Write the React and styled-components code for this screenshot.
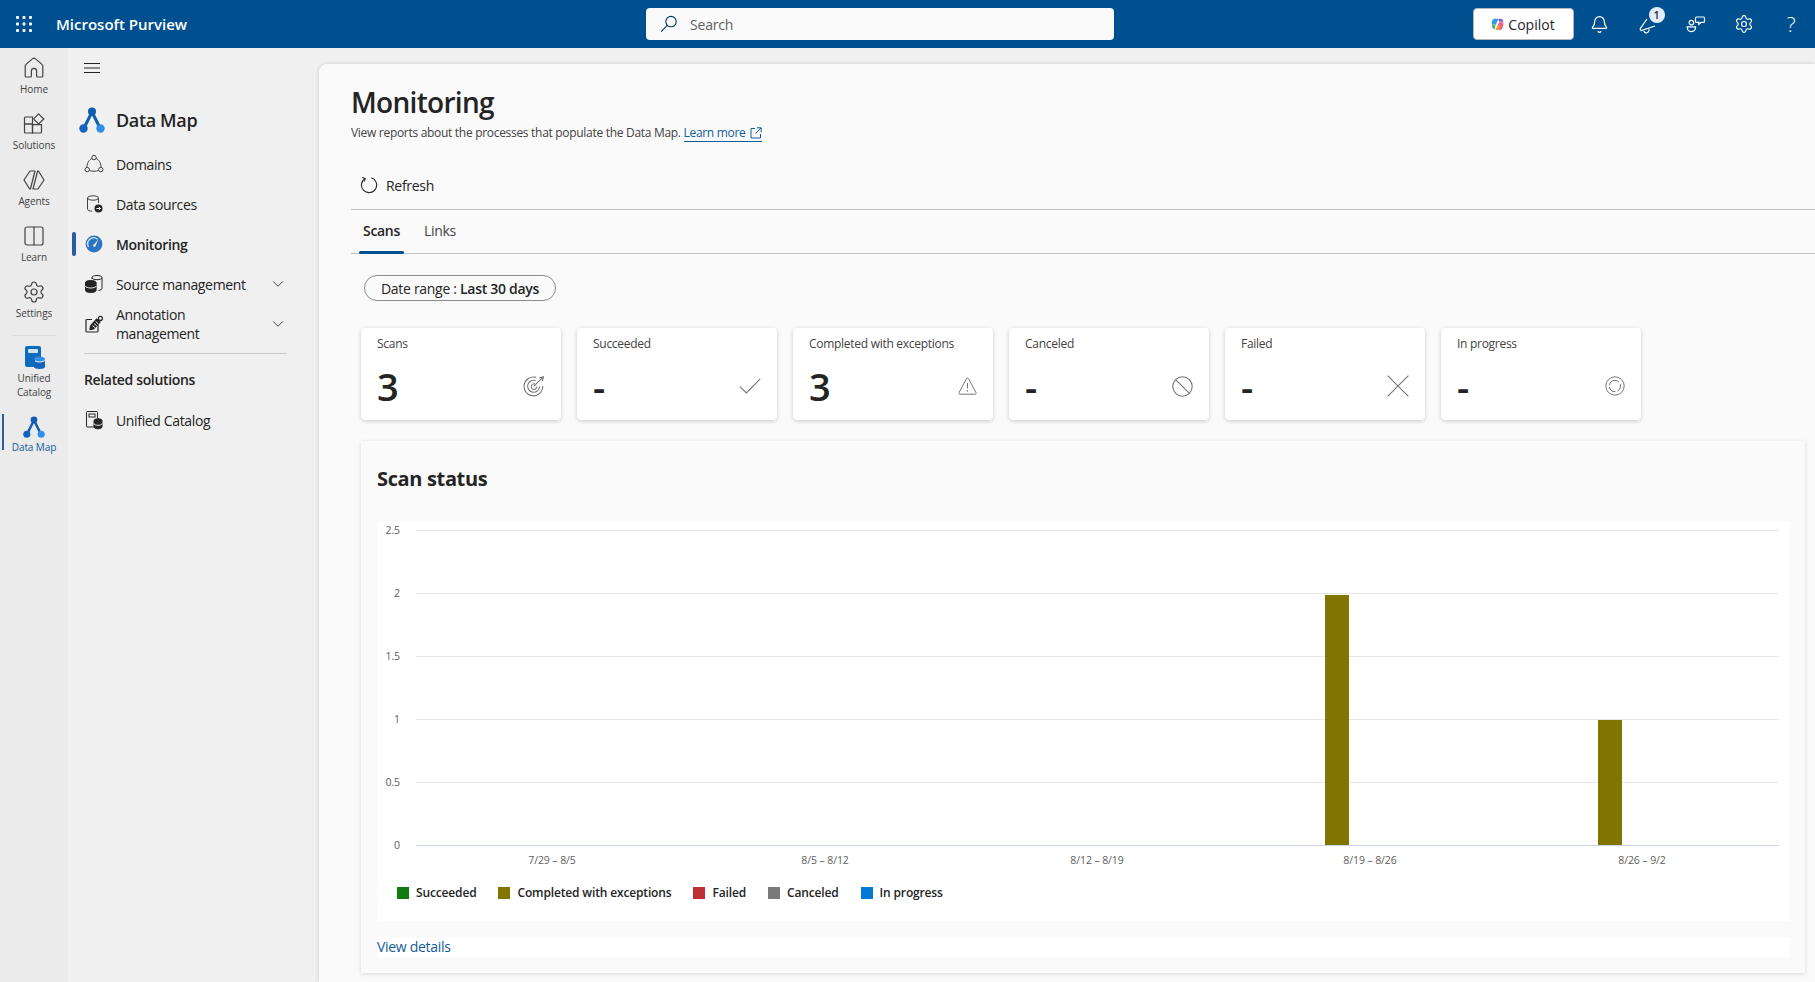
import React from 'react'
import styled, { createGlobalStyle } from 'styled-components'
import { Settings, Columns2, Bell, ChevronDown } from 'lucide-react'

const Global = createGlobalStyle`
  html, body { margin: 0; padding: 0; height: 100%; overflow: hidden; }
  body { font-family: "Open Sans", "Noto Sans", "Liberation Sans", sans-serif; background: #f0f0f0; color: #242424; }
  * { box-sizing: border-box; }
`

const DataMapLogo = ({ size }) => (
  <svg width={size} height={size} viewBox="0 0 26 26">
    <path d="M13 5 L5 21 M13 5 L21 21" stroke="#0f5cb0" strokeWidth="3" fill="none" />
    <circle cx="13" cy="4.5" r="4" fill="#0f5cb0" />
    <circle cx="4.5" cy="21.5" r="4.2" fill="#1464bd" />
    <circle cx="21.5" cy="21.5" r="4.2" fill="#2f8fe6" />
  </svg>
)

const Waffle = () => (
  <svg width="16" height="16" viewBox="0 0 16 16" fill="#fff">
    {[1.5, 8, 14.5].map(y => [1.5, 8, 14.5].map(x => <rect key={`${x}-${y}`} x={x - 1.4} y={y - 1.4} width="2.8" height="2.8" rx=".6" />))}
  </svg>
)

const SearchGlass = () => (
  <svg width="18" height="18" viewBox="0 0 18 18" fill="none" stroke="#003966" strokeWidth="1.1">
    <circle cx="11" cy="6.6" r="5.2" />
    <path d="M7.2 10.4 L1.2 16.6" />
  </svg>
)

const CopilotLogo = () => (
  <svg width="13" height="13" viewBox="0 0 14 14">
    <path d="M4 .8 h4 L5.4 7 H1 C.5 4 1.4 1 4 .8Z" fill="#2f9be0" />
    <path d="M8 .8 h2.4 c1.6 0 2.6 1.4 3 3.2 H8.6Z" fill="#7b5fd9" />
    <path d="M1 7 h4 l-1 5.4 C2.2 12.2 1 10 1 7Z" fill="#4cb86e" />
    <path d="M8.6 4.6 H13.4 C13.6 9 12 13 9 13 H5 Z" fill="#e8618c" />
    <path d="M5 13 h3 L10.4 8.2 H7 Z" fill="#f3a23b" />
  </svg>
)

const Megaphone = () => (
  <svg width="20" height="20" viewBox="0 0 20 20" fill="none" stroke="#fff" strokeWidth="1.2">
    <path d="M9 5 L2.4 14.4 a1.6 1.6 0 0 0 .8 2.2 L17 12" />
    <path d="M5.8 17 a2.6 2.6 0 0 0 5 -1.8" />
  </svg>
)

const PeopleChat = () => (
  <svg width="20" height="20" viewBox="0 0 20 20" fill="none" stroke="#fff" strokeWidth="1.2">
    <circle cx="5.4" cy="8.6" r="2.3" />
    <path d="M1.2 12.8 h8.4 c0 3.2 -1.7 4.8 -4.2 4.8 S1.2 16 1.2 12.8Z" />
    <path d="M10.5 3 h7 a1 1 0 0 1 1 1 v3.4 a1 1 0 0 1 -1 1 h-2.4 l-2.2 2 v-2 h-2.4 a1 1 0 0 1 -1 -1 V4 a1 1 0 0 1 1 -1Z" />
  </svg>
)

const HomeIcon = () => (
  <svg width="24" height="24" viewBox="0 0 24 24" fill="none" stroke="#424242" strokeWidth="1.2">
    <path d="M10.4 2.9 a2.4 2.4 0 0 1 3.2 0 L20 8.4 a2 2 0 0 1 .8 1.6 V20 a1 1 0 0 1 -1 1 H15.6 a1 1 0 0 1 -1 -1 V15 a2.6 2.6 0 0 0 -5.2 0 V20 a1 1 0 0 1 -1 1 H4.2 a1 1 0 0 1 -1 -1 V10 a2 2 0 0 1 .8 -1.6Z" />
  </svg>
)

const SolutionsIcon = () => (
  <svg width="24" height="24" viewBox="0 0 24 24" fill="none" stroke="#424242" strokeWidth="1.2">
    <path d="M3.5 5 h7 v7 h-8 V6 a1 1 0 0 1 1 -1Z" />
    <path d="M2.5 12 h8 v9 h-7 a1 1 0 0 1 -1 -1Z" />
    <path d="M10.5 12.6 h9 v7.4 a1 1 0 0 1 -1 1 h-8Z" />
    <path d="M16.6 1.8 L21.8 7 L16.6 12 L12 7.4 V6.4Z" />
  </svg>
)

const AgentsIcon = () => (
  <svg width="24" height="24" viewBox="0 0 24 24" fill="none" stroke="#424242" strokeWidth="1.2" strokeLinejoin="round">
    <path d="M8 3 H13 L8.4 21 H7.6 L2 12Z" />
    <path d="M16 21 H11 L15.6 3 H16.4 L22 12Z" />
  </svg>
)

const UnifiedCatalogIcon = () => (
  <svg width="24" height="24" viewBox="0 0 24 24">
    <path d="M3 3 a2 2 0 0 1 2 -2 h12 a2 2 0 0 1 2 2 v10 h-6 v9 H5 a2 2 0 0 1 -2 -2Z" fill="#0f6cbd" />
    <rect x="6" y="4" width="10" height="4" rx="1" fill="#cfe4fa" />
    <ellipse cx="17.5" cy="14" rx="5.5" ry="2.4" fill="#2f8fe6" />
    <path d="M12 15 v7 c0 1.2 2.4 2 5.5 2 s5.5 -.8 5.5 -2 v-7 c0 1.2 -2.4 2.4 -5.5 2.4 S12 16.2 12 15Z" fill="#1464bd" />
  </svg>
)

const HamburgerIcon = () => (
  <svg width="16" height="10" viewBox="0 0 16 10" stroke="#242424" strokeWidth="1">
    <path d="M0 .5 H16 M0 5 H16 M0 9.5 H16" />
  </svg>
)

const DomainsIcon = () => (
  <svg width="20" height="20" viewBox="0 0 20 20" fill="none" stroke="#424242" strokeWidth="1">
    <circle cx="10" cy="3.6" r="2.2" />
    <circle cx="3.2" cy="15.6" r="2.2" />
    <circle cx="16.8" cy="15.6" r="2.2" />
    <path d="M7.9 4.4 C5.2 5.8 3.4 8 2.8 13.4 M12.1 4.4 C14.8 5.8 16.6 8 17.2 13.4 M5.4 16.6 C8 17.4 12 17.4 14.6 16.6" />
  </svg>
)

const DataSourcesIcon = () => (
  <svg width="20" height="20" viewBox="0 0 20 20" fill="none" stroke="#424242" strokeWidth="1">
    <ellipse cx="9" cy="4" rx="5.5" ry="2.2" />
    <path d="M3.5 4 v11 c0 1.2 2 2 4.5 2.2 M14.5 4 v5" />
    <circle cx="14.5" cy="14.5" r="4" fill="#242424" stroke="none" />
    <path d="M12.4 14.5 h4 M14.8 12.8 l1.7 1.7 -1.7 1.7" stroke="#fff" />
  </svg>
)

const MonitoringIcon = () => (
  <svg width="20" height="20" viewBox="0 0 20 20">
    <circle cx="10" cy="10" r="8.4" fill="#2f74c0" />
    <path d="M4.6 13 A6 6 0 0 1 13.5 5.2" fill="none" stroke="#cfe2f7" strokeWidth="1.4" />
    <path d="M8.6 12 L14.4 5.4 L11 13 Z" fill="#e8f1fb" />
  </svg>
)

const SourceMgmtIcon = () => (
  <svg width="20" height="20" viewBox="0 0 20 20" fill="none" stroke="#242424" strokeWidth="1">
    <path d="M8 5 V3.6 c0 -1.2 2.2 -2.1 5 -2.1 s5 .9 5 2.1 v10.8 c0 1 -1.4 1.8 -3.4 2.1" />
    <path d="M8 3.6 c0 1.2 2.2 2.1 5 2.1 s5 -.9 5 -2.1" />
    <path d="M1.5 8.5 c0 -1.2 2.4 -2 5.3 -2 s5.3 .8 5.3 2 v8 c0 1.2 -2.4 2 -5.3 2 s-5.3 -.8 -5.3 -2Z" fill="#242424" />
    <path d="M1.5 12 c0 1.2 2.4 2 5.3 2 s5.3 -.8 5.3 -2" stroke="#f0f0f0" />
  </svg>
)

const AnnotationIcon = () => (
  <svg width="20" height="20" viewBox="0 0 20 20" fill="none" stroke="#242424" strokeWidth="1.2">
    <path d="M8 5.5 H3 a1 1 0 0 0 -1 1 V17 a1 1 0 0 0 1 1 H13 a1 1 0 0 0 1 -1 V11" />
    <path d="M6.5 12 L12.6 5 L16 8 L9.5 15 L6 15.6Z" fill="#242424" />
    <path d="M8.4 11.6 l2.6 2 M10 9.6 l2.6 2 M11.6 7.6 l2.6 2" stroke="#f0f0f0" strokeWidth="1" />
    <circle cx="16.4" cy="4.4" r="2" />
  </svg>
)

const CatalogSmallIcon = () => (
  <svg width="20" height="20" viewBox="0 0 20 20" fill="none" stroke="#242424" strokeWidth="1">
    <path d="M10 17 H3.5 a1 1 0 0 1 -1 -1 V2.5 a1 1 0 0 1 1 -1 h9 a1 1 0 0 1 1 1 V8" />
    <rect x="5" y="4" width="6" height="3" />
    <path d="M10 10.5 c0 -1 1.8 -1.8 4 -1.8 s4 .8 4 1.8 v6.5 c0 1 -1.8 1.8 -4 1.8 s-4 -.8 -4 -1.8Z" fill="#242424" />
    <path d="M10 13.5 c0 1 1.8 1.8 4 1.8 s4 -.8 4 -1.8" stroke="#f0f0f0" />
  </svg>
)

const RefreshIcon = () => (
  <svg width="18" height="18" viewBox="0 0 18 18" fill="none" stroke="#242424" strokeWidth="1.1">
    <path d="M5 2.6 A7.6 7.6 0 1 0 11.4 1.8" />
    <path d="M2.2 1.4 L5.2 2.6 L4 5.6" />
  </svg>
)

const ExternalIcon = () => (
  <svg width="12" height="12" viewBox="0 0 12 12" fill="none" stroke="#0f5c99" strokeWidth="1">
    <path d="M5 1.5 H1 V11 H10.5 V7 M7 .8 H11.2 V5 M11 1 L5.5 6.5" />
  </svg>
)

const TargetIcon = () => (
  <svg width="22" height="22" viewBox="0 0 22 22" fill="none" stroke="currentColor" strokeWidth="1.1">
    <path d="M13 2.4 A9.4 9.4 0 1 0 19.8 11" />
    <path d="M12.6 5.6 A6 6 0 1 0 16.6 11.4" />
    <path d="M12 9 A2.8 2.8 0 1 0 13.8 11.6" />
    <path d="M10.6 11.4 L20.4 1.8 M16 3 L20.4 1.8 L19.4 6" />
  </svg>
)

const CheckIcon = () => (
  <svg width="22" height="16" viewBox="0 0 22 16" fill="none" stroke="currentColor" strokeWidth="1.1">
    <path d="M.8 8.6 L7.4 15 L21.2 .8" />
  </svg>
)

const WarnIcon = () => (
  <svg width="19" height="18" viewBox="0 0 19 18" fill="none" stroke="currentColor" strokeWidth="1">
    <path d="M8.5 1.6 a1.1 1.1 0 0 1 2 0 L18 15.6 a1 1 0 0 1 -1 1.6 H2 a1 1 0 0 1 -1 -1.6Z" />
    <path d="M9.5 6 V11.5 M9.5 13.2 V14.6" />
  </svg>
)

const BanIcon = () => (
  <svg width="21" height="21" viewBox="0 0 21 21" fill="none" stroke="currentColor" strokeWidth="1.1">
    <circle cx="10.5" cy="10.5" r="9.7" />
    <path d="M3.6 3.6 L17.4 17.4" />
  </svg>
)

const CrossIcon = () => (
  <svg width="22" height="22" viewBox="0 0 22 22" fill="none" stroke="currentColor" strokeWidth="1.1">
    <path d="M.6 .6 L21.4 21.4 M21.4 .6 L.6 21.4" />
  </svg>
)

const ProgressIcon = () => (
  <svg width="20" height="20" viewBox="0 0 20 20" fill="none" stroke="currentColor" strokeWidth="1">
    <circle cx="10" cy="10" r="9.2" />
    <circle cx="10" cy="10" r="5.6" strokeDasharray="6 2 8 2 12 2" />
  </svg>
)

const Page = styled.div`
  display: flex;
  flex-direction: column;
  height: 982px;
  overflow: hidden;
`

const TopBar = styled.header`
  display: flex;
  align-items: center;
  flex: 0 0 48px;
  background: #00508f;
  color: #fff;
`

const Brand = styled.div`
  display: flex;
  align-items: center;
  gap: 24px;
  width: 646px;
  padding-left: 16px;
  font-size: 15px;
  font-weight: 600;
`

const SearchBox = styled.div`
  display: flex;
  align-items: center;
  gap: 12px;
  width: 468px;
  height: 32px;
  padding: 0 14px;
  border-radius: 4px;
  background: #fafafa;
  font-size: 14px;
  letter-spacing: -.2px;
  color: #616161;
`

const Actions = styled.div`
  display: flex;
  align-items: center;
  margin-left: auto;
`

const CopilotButton = styled.button`
  display: flex;
  align-items: center;
  justify-content: center;
  gap: 4px;
  width: 101px;
  height: 32px;
  margin-right: 2px;
  border: 1px solid #b8b8b8;
  border-radius: 4px;
  background: #fff;
  color: #242424;
  font: 500 14px "Open Sans", sans-serif;
`

const HeadIcon = styled.div`
  position: relative;
  display: flex;
  align-items: center;
  justify-content: center;
  width: ${p => p.$wide ? '49.5px' : '47.5px'};
  height: 48px;
`

const HelpMark = styled.span`
  font-size: 21px;
  font-weight: 300;
  line-height: 1;
`

const Badge = styled.span`
  position: absolute;
  top: 7px;
  right: 8px;
  width: 16px;
  height: 16px;
  border-radius: 50%;
  background: #e3edfb;
  color: #242424;
  font-size: 10px;
  font-weight: 600;
  line-height: 16px;
  text-align: center;
`

const Body = styled.div`
  display: flex;
  flex: 1;
  min-height: 0;
`

const Rail = styled.nav`
  display: flex;
  flex-direction: column;
  flex: 0 0 68px;
  padding-top: 4px;
  background: #ebebeb;
`

const RailItem = styled.div`
  position: relative;
  display: flex;
  flex-direction: column;
  align-items: center;
  height: ${p => p.$tall ? '71px' : '56px'};
  padding-top: 4px;
  color: ${p => p.$active ? '#0f5c99' : '#424242'};
  font-size: 10px;
  letter-spacing: -.1px;
  line-height: 14px;
  text-align: center;

  svg { margin-bottom: 2px; flex: none; }

  ${p => p.$active && `
    &::before {
      content: '';
      position: absolute;
      left: 2px;
      top: 2px;
      width: 2px;
      height: 36px;
      background: #2b5d9e;
    }
  `}
`

const RailDivider = styled.div`
  flex: none;
  height: 1px;
  margin: 3px 12px 5px;
  background: #dcdcdc;
`

const Side = styled.aside`
  display: flex;
  flex-direction: column;
  flex: 0 0 251px;
  padding: 8px 32px 0 16px;
  letter-spacing: -.35px;
`

const Hamburger = styled.div`
  display: flex;
  height: 24px;
  align-items: center;
`

const SideTitle = styled.div`
  display: flex;
  align-items: center;
  gap: 11px;
  height: 40px;
  margin: 20px 0 4px -5px;
  font-size: 18px;
  font-weight: 600;
`

const NavItem = styled.div`
  position: relative;
  display: flex;
  align-items: center;
  gap: 12px;
  min-height: 40px;
  font-size: 14px;
  font-weight: ${p => p.$active ? 600 : 400};
  line-height: 19px;
  color: #242424;

  svg { flex: none; }

  ${p => p.$active && `
    &::before {
      content: '';
      position: absolute;
      left: -12px;
      top: 8px;
      width: 4px;
      height: 24px;
      border-radius: 2px;
      background: #2b5d9e;
    }
  `}
`

const NavLabel = styled.span`
  flex: 1;
`

const NavDivider = styled.div`
  height: 1px;
  margin-top: 9px;
  background: #c8c8c8;
`

const SideHeading = styled.div`
  margin: 16px 0 10px;
  font-size: 14px;
  font-weight: 600;
  line-height: 20px;
`

const Panel = styled.main`
  flex: 1;
  min-width: 0;
  margin-top: 16px;
  padding: 20px 0 0 32px;
  border-top-left-radius: 8px;
  background: #fafafa;
  box-shadow: 0 0 4px rgba(0, 0, 0, .16);
`

const PageTitle = styled.h1`
  margin: 0;
  font-size: 28px;
  font-weight: 600;
  letter-spacing: -.7px;
  line-height: 36px;
`

const Subtitle = styled.p`
  margin: 5px 0 0;
  font-size: 12px;
  letter-spacing: -.3px;
  line-height: 16px;
  color: #424242;
`

const LearnLink = styled.a`
  display: inline-flex;
  align-items: center;
  gap: 4px;
  border-bottom: 1px solid #0f5c99;
  color: #0f5c99;
`

const Toolbar = styled.div`
  display: flex;
  align-items: center;
  gap: 8px;
  height: 45px;
  margin-top: 23px;
  padding: 0 0 4px 9px;
  border-bottom: 1px solid #c4c4c4;
  font-size: 14px;
  letter-spacing: -.3px;
`

const Tabs = styled.div`
  display: flex;
  height: 44px;
  padding-left: 8px;
  border-bottom: 1px solid #c4c4c4;
`

const Tab = styled.div`
  position: relative;
  display: flex;
  align-items: center;
  padding: 0 4px 2px;
  margin-right: 16px;
  font-size: 14px;
  letter-spacing: -.3px;
  font-weight: ${p => p.$active ? 600 : 400};
  color: ${p => p.$active ? '#242424' : '#424242'};

  ${p => p.$active && `
    &::after {
      content: '';
      position: absolute;
      left: 0;
      right: 0;
      bottom: -1px;
      height: 3px;
      border-radius: 2px;
      background: #00508f;
    }
  `}
`

const Content = styled.div`
  padding: 21px 10px 0 10px;
`

const Pill = styled.div`
  display: flex;
  align-items: center;
  width: fit-content;
  height: 26px;
  margin-left: 3px;
  padding: 0 16px;
  border: 1px solid #8a8a8a;
  border-radius: 13px;
  font-size: 14px;
  letter-spacing: -.3px;
  white-space: pre;
  b { font-weight: 600; }
`

const Cards = styled.div`
  display: flex;
  gap: 16px;
  margin-top: 27px;
`

const Card = styled.div`
  width: 200px;
  height: 92px;
  padding: 8px 16px 0;
  border-radius: 4px;
  background: #fff;
  box-shadow: 0 1px 4px rgba(0, 0, 0, .2);
`

const CardLabel = styled.div`
  font-size: 12px;
  letter-spacing: -.28px;
  line-height: 16px;
  color: #424242;
`

const CardRow = styled.div`
  display: flex;
  align-items: center;
  justify-content: space-between;
  height: 44px;
  margin-top: 12px;
  color: #767676;
`

const CardValue = styled.div`
  font-size: 38px;
  font-weight: 600;
  line-height: 44px;
  color: #242424;
`

const StatusCard = styled.section`
  height: 532px;
  margin-top: 21px;
  padding: 0 16px;
  background: #fafafa;
  box-shadow: 0 1px 4px rgba(0, 0, 0, .14);
`

const StatusTitle = styled.h2`
  height: 80px;
  margin: 0;
  padding-top: 24px;
  font-size: 20px;
  font-weight: 700;
  letter-spacing: -.35px;
  line-height: 28px;
`

const ChartBox = styled.div`
  height: 400px;
  background: #fff;
`

const Legend = styled.div`
  display: flex;
  gap: 22px;
  margin-top: 12px;
  padding-left: 20px;
  font-size: 12px;
  font-weight: 600;
  letter-spacing: -.15px;
  line-height: 16px;
`

const LegendItem = styled.div`
  display: flex;
  align-items: center;
  gap: 7px;
  &::before {
    content: '';
    width: 12px;
    height: 12px;
    background: ${p => p.$color};
  }
`

const DetailsRow = styled.div`
  height: 20px;
  margin-top: 16px;
  background: #fff;
  font-size: 14px;
  letter-spacing: -.3px;
  line-height: 20px;
  color: #0f5c99;
`

const cards = [
  { label: 'Scans', value: '3', icon: <TargetIcon /> },
  { label: 'Succeeded', value: '-', icon: <CheckIcon /> },
  { label: 'Completed with exceptions', value: '3', icon: <WarnIcon /> },
  { label: 'Canceled', value: '-', icon: <BanIcon /> },
  { label: 'Failed', value: '-', icon: <CrossIcon /> },
  { label: 'In progress', value: '-', icon: <ProgressIcon /> },
]

const legend = [
  ['Succeeded', '#107c10'],
  ['Completed with exceptions', '#817400'],
  ['Failed', '#bc2f32'],
  ['Canceled', '#7a7a7a'],
  ['In progress', '#0078d4'],
]

const axisFont = { fontFamily: '"Open Sans", sans-serif', fontSize: 10.5, letterSpacing: '-.1px' }

function ScanChart() {
  const ticks = ['2.5', '2', '1.5', '1', '0.5', '0']
  const weeks = [['7/29 – 8/5', 175], ['8/5 – 8/12', 448], ['8/12 – 8/19', 720], ['8/19 – 8/26', 993], ['8/26 – 9/2', 1265]]
  return (
    <svg width="1412" height="352" viewBox="0 0 1412 352" style={{ display: 'block' }}>
      {ticks.map((t, i) => {
        const y = 9 + 63 * i
        return (
          <g key={t}>
            <line x1="39" x2="1402" y1={y + .5} y2={y + .5} stroke={t === '0' ? '#c8d3e6' : '#e6e6e6'} />
            <text x="23" y={y + 4} textAnchor="end" fill="#605e5c" style={axisFont}>{t}</text>
          </g>
        )
      })}
      <rect x="948" y="74" width="24" height="250" fill="#817400" />
      <rect x="1221" y="199" width="24" height="125" fill="#817400" />
      {weeks.map(([t, x]) => (
        <text key={t} x={x} y="343" textAnchor="middle" fill="#605e5c" style={axisFont}>{t}</text>
      ))}
    </svg>
  )
}

export default function App() {
  return (
    <Page>
      <Global />
      <TopBar>
        <Brand><Waffle />Microsoft Purview</Brand>
        <SearchBox><SearchGlass />Search</SearchBox>
        <Actions>
          <CopilotButton><CopilotLogo />Copilot</CopilotButton>
          <HeadIcon><Bell size={19} strokeWidth={1.5} color="#fff" /></HeadIcon>
          <HeadIcon $wide><Megaphone /><Badge>1</Badge></HeadIcon>
          <HeadIcon><PeopleChat /></HeadIcon>
          <HeadIcon><Settings size={20} strokeWidth={1.4} color="#fff" /></HeadIcon>
          <HeadIcon><HelpMark>?</HelpMark></HeadIcon>
        </Actions>
      </TopBar>
      <Body>
        <Rail>
          <RailItem><HomeIcon />Home</RailItem>
          <RailItem><SolutionsIcon />Solutions</RailItem>
          <RailItem><AgentsIcon />Agents</RailItem>
          <RailItem><Columns2 size={24} strokeWidth={1.2} />Learn</RailItem>
          <RailItem><Settings size={24} strokeWidth={1.2} />Settings</RailItem>
          <RailDivider />
          <RailItem $tall><UnifiedCatalogIcon />Unified<br />Catalog</RailItem>
          <RailItem $active><DataMapLogo size={22} />Data Map</RailItem>
        </Rail>
        <Side>
          <Hamburger><HamburgerIcon /></Hamburger>
          <SideTitle><DataMapLogo size={26} />Data Map</SideTitle>
          <NavItem><DomainsIcon />Domains</NavItem>
          <NavItem><DataSourcesIcon />Data sources</NavItem>
          <NavItem $active><MonitoringIcon />Monitoring</NavItem>
          <NavItem><SourceMgmtIcon /><NavLabel>Source management</NavLabel><ChevronDown size={18} strokeWidth={1.1} /></NavItem>
          <NavItem><AnnotationIcon /><NavLabel>Annotation<br />management</NavLabel><ChevronDown size={18} strokeWidth={1.1} /></NavItem>
          <NavDivider />
          <SideHeading>Related solutions</SideHeading>
          <NavItem><CatalogSmallIcon />Unified Catalog</NavItem>
        </Side>
        <Panel>
          <PageTitle>Monitoring</PageTitle>
          <Subtitle>View reports about the processes that populate the Data Map. <LearnLink>Learn more <ExternalIcon /></LearnLink></Subtitle>
          <Toolbar><RefreshIcon />Refresh</Toolbar>
          <Tabs>
            <Tab $active>Scans</Tab>
            <Tab>Links</Tab>
          </Tabs>
          <Content>
            <Pill>Date range : <b>Last 30 days</b></Pill>
            <Cards>
              {cards.map(c => (
                <Card key={c.label}>
                  <CardLabel>{c.label}</CardLabel>
                  <CardRow><CardValue>{c.value}</CardValue>{c.icon}</CardRow>
                </Card>
              ))}
            </Cards>
            <StatusCard>
              <StatusTitle>Scan status</StatusTitle>
              <ChartBox>
                <ScanChart />
                <Legend>
                  {legend.map(([t, col]) => <LegendItem key={t} $color={col}>{t}</LegendItem>)}
                </Legend>
              </ChartBox>
              <DetailsRow>View details</DetailsRow>
            </StatusCard>
          </Content>
        </Panel>
      </Body>
    </Page>
  )
}
